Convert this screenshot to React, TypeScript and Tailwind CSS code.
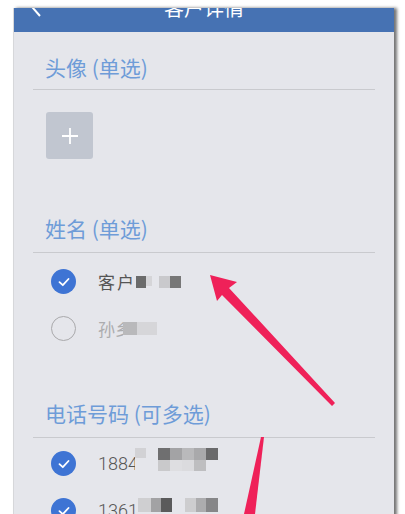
import React from "react";

const font = { fontFamily: '"Noto Sans CJK SC", "Noto Sans", sans-serif' };

// 打码方块
function Mosaic({ cells }: { cells: { w: number; h: number; c: string; mt?: number }[] }) {
  return (
    <div className="flex items-start">
      {cells.map((cell, i) => (
        <div key={i} style={{ width: cell.w, height: cell.h, background: cell.c, marginTop: cell.mt ?? 0 }} />
      ))}
    </div>
  );
}

function Check({ checked }: { checked: boolean }) {
  if (!checked) {
    return <div className="w-[25px] h-[25px] rounded-full border-[1.5px] border-[#a9a9ab] shrink-0" />;
  }
  return (
    <div className="w-[25px] h-[25px] rounded-full bg-[#3e74d4] shrink-0 flex items-center justify-center">
      <svg width="14" height="14" viewBox="0 0 14 14" fill="none">
        <path d="M2.5 7.2 L5.8 10.2 L11.5 4" stroke="white" strokeWidth="1.8" strokeLinecap="round" strokeLinejoin="round" />
      </svg>
    </div>
  );
}

function SectionTitle({ children, pt, pb }: { children: React.ReactNode; pt: string; pb: string }) {
  return (
    <div className={`${pt} ${pb} text-[21px] leading-[22px] text-[#6e9cd8] pl-[12px]`}>
      {children}
    </div>
  );
}

function Row({ checked, children }: { checked: boolean; children: React.ReactNode }) {
  return (
    <div className="h-[47px] flex items-center pl-[18px]">
      <Check checked={checked} />
      <div className="ml-[22px] flex items-center">{children}</div>
    </div>
  );
}

export default function App() {
  return (
    <div className="relative w-[405px] h-[514px] overflow-hidden bg-white pt-[8px] pl-[13px]" style={font}>
      <div className="w-[381px] h-[520px] bg-[#e5e6eb] border-l border-[#d6d7da] shadow-[3px_0_3px_rgba(0,0,0,0.55)]">
        {/* 顶部栏 */}
        <div className="relative h-[24px] bg-[#4672b3] overflow-hidden">
          <svg className="absolute inset-0" width="381" height="24">
            <polyline points="27,-8 19,0 26,8" fill="none" stroke="white" strokeWidth="2" />
          </svg>
          <div className="flex justify-center -mt-[10px] text-[20px] leading-[20px] text-white">客户详情</div>
        </div>

        <div className="px-[19px]">
          <SectionTitle pt="pt-[24px]" pb="pb-[11px]">头像 (单选)</SectionTitle>
          <div className="h-px bg-[#c9cace]" />
          <div className="pt-[22px] pl-[13px]">
            <div className="w-[47px] h-[47px] rounded-[3px] bg-[#c1c6d0] flex items-center justify-center">
              <svg width="18" height="18" viewBox="0 0 18 18">
                <path d="M9 1 V17 M1 9 H17" stroke="white" strokeWidth="1.8" />
              </svg>
            </div>
          </div>

          <SectionTitle pt="pt-[58px]" pb="pb-[13px]">姓名 (单选)</SectionTitle>
          <div className="h-px bg-[#c9cace]" />
          <div className="pt-[5px]">
            <Row checked>
              <span className="text-[17px] text-[#555] tracking-[2px]">客户</span>
              <Mosaic
                cells={[
                  { w: 10, h: 12, c: "#6b6b6b", mt: 1 },
                  { w: 6, h: 10, c: "#d5d5d8", mt: 1 },
                  { w: 7, h: 12, c: "transparent" },
                  { w: 11, h: 12, c: "#c9c9cc", mt: 1 },
                  { w: 11, h: 12, c: "#777", mt: 1 },
                ]}
              />
            </Row>
            <Row checked={false}>
              <span className="text-[17px] text-[#acacae]">孙</span>
              <span className="inline-block w-[8px] overflow-hidden text-[17px] text-[#acacae]">乡</span>
              <Mosaic
                cells={[
                  { w: 14, h: 13, c: "#b9b9bb" },
                  { w: 20, h: 13, c: "#d6d6d9" },
                ]}
              />
            </Row>
          </div>

          <SectionTitle pt="pt-[50px]" pb="pb-[13px]">电话号码 (可多选)</SectionTitle>
          <div className="h-px bg-[#c9cace]" />
          <div className="pt-[2px]">
            <Row checked>
              <span className="text-[18px] text-[#555]" style={{ fontFamily: "Roboto, sans-serif", fontWeight: 300 }}>188</span>
              <span className="inline-block w-[7px] overflow-hidden text-[18px] text-[#555]" style={{ fontFamily: "Roboto, sans-serif", fontWeight: 300 }}>4</span>
              <div className="flex items-start -mt-[8px]">
                <div className="w-[11px] h-[10px] bg-[#d2d2d5]" />
                <div className="w-[12px]" />
                <div className="flex flex-col">
                  <Mosaic
                    cells={[
                      { w: 12, h: 12, c: "#6f6f70" },
                      { w: 12, h: 12, c: "#a3a3a5" },
                      { w: 12, h: 12, c: "#b9b9bb" },
                      { w: 12, h: 12, c: "#a9a9ab" },
                      { w: 12, h: 12, c: "#6a6a6b" },
                    ]}
                  />
                  <Mosaic
                    cells={[
                      { w: 12, h: 11, c: "#c9c9cb" },
                      { w: 12, h: 11, c: "#dedee1" },
                      { w: 12, h: 11, c: "#dbdbde" },
                      { w: 12, h: 11, c: "#bebec0" },
                    ]}
                  />
                </div>
              </div>
            </Row>
            <Row checked>
              <span className="text-[18px] text-[#555]" style={{ fontFamily: "Roboto, sans-serif", fontWeight: 300 }}>1361</span>
              <Mosaic
                cells={[
                  { w: 13, h: 14, c: "#cfcfd1", mt: -6 },
                  { w: 10, h: 14, c: "#a2a2a4", mt: -6 },
                  { w: 11, h: 14, c: "#5a5a5b", mt: -6 },
                  { w: 13, h: 14, c: "transparent" },
                  { w: 11, h: 14, c: "#cdcdcf", mt: -6 },
                  { w: 10, h: 14, c: "#acacae", mt: -6 },
                  { w: 12, h: 14, c: "#868688", mt: -6 },
                ]}
              />
            </Row>
          </div>
        </div>
      </div>

      {/* 红色箭头标注 */}
      <svg className="absolute inset-0 pointer-events-none" width="405" height="514">
        <path d="M210 275 L237 282 L229 288 L335 403 L332 406 L222 295 L217 301 Z" fill="#ef2159" />
        <path d="M261 437 L264 437 L255 514 L244 514 Z" fill="#ef2159" />
      </svg>
    </div>
  );
}
